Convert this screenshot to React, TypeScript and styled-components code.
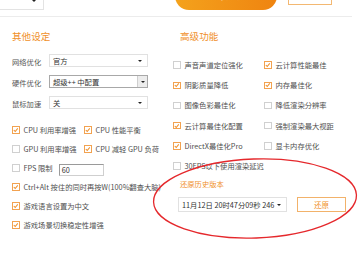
import React from 'react';
import styled, { createGlobalStyle } from 'styled-components';

const GlobalStyle = createGlobalStyle`
  html, body {
    margin: 0;
    padding: 0;
    background: #ffffff;
  }
  body {
    width: 360px;
    height: 254px;
    overflow: hidden;
    font-family: "Noto Sans CJK SC", "Noto Sans", sans-serif;
    color: #4a4a4a;
  }
`;

const ORANGE = '#f0902a';

const Page = styled.div`
  position: relative;
  width: 360px;
  height: 254px;
  overflow: hidden;
`;

const TopBar = styled.div`
  display: flex;
  align-items: flex-end;
  height: 10px;
  overflow: hidden;
`;

const TopSelect = styled.div`
  box-sizing: border-box;
  width: 44px;
  height: 18px;
  border: 1px solid #e3e3e3;
  border-left: none;
  display: flex;
  align-items: center;
  justify-content: flex-end;
  padding-right: 7px;
  background: #fff;
`;

const StartButton = styled.div`
  width: 102px;
  height: 31px;
  margin-left: 131px;
  border-radius: 14px;
  background: linear-gradient(90deg, #f4a21c, #ef8410);
  color: #fff;
  font-size: 11px;
  font-weight: bold;
  display: flex;
  align-items: center;
  justify-content: center;
  line-height: 1;
`;

const GhostButton = styled.div`
  box-sizing: border-box;
  width: 44px;
  height: 20px;
  margin-left: 11px;
  margin-bottom: 5.5px;
  border: 1px solid #f3b872;
  background: #fff;
`;

const Divider = styled.div`
  width: 352px;
  height: 1px;
  margin-top: 6px;
  background: #ececec;
`;

const Main = styled.div`
  display: grid;
  grid-template-columns: 161px 1fr;
  padding-left: 12px;
`;

const Column = styled.div`
  display: flex;
  flex-direction: column;
`;

const Title = styled.div<{ indent?: number }>`
  margin-top: 13px;
  padding-left: ${p => p.indent ?? 0}px;
  font-size: 9.6px;
  line-height: 12px;
  color: ${ORANGE};
`;

const FormList = styled.div`
  display: flex;
  flex-direction: column;
  gap: 8px;
  margin-top: 12px;
`;

const FormRow = styled.div`
  display: flex;
  align-items: center;
  height: 13px;
`;

const FormLabel = styled.span`
  width: 37px;
  padding-top: 3px;
  font-size: 7.3px;
  line-height: 10px;
  color: #555;
  white-space: nowrap;
`;

const Select = styled.div<{ width: number; height: number; strong?: boolean }>`
  box-sizing: border-box;
  width: ${p => p.width}px;
  height: ${p => p.height}px;
  border: 1px solid ${p => (p.strong ? '#a8a8a8' : '#e1e1e1')};
  background: #fff;
  display: flex;
  align-items: center;
  justify-content: space-between;
  padding-left: 3px;
  padding-right: ${p => (p.strong ? 0 : 5)}px;
  font-size: 7.3px;
  line-height: 10px;
  color: #333;
  white-space: nowrap;
`;

const DropButton = styled.div`
  box-sizing: border-box;
  width: 10px;
  height: 100%;
  background: #ececec;
  border-left: 1px solid #cfcfcf;
  display: flex;
  align-items: center;
  justify-content: center;
`;

const Caret = styled.span`
  width: 0;
  height: 0;
  border-left: 2.2px solid transparent;
  border-right: 2.2px solid transparent;
  border-top: 2.6px solid #222;
`;

const CheckGrid = styled.div<{ colWidth: number; rowHeight: number; top: number }>`
  display: grid;
  grid-template-columns: ${p => p.colWidth}px 1fr;
  grid-auto-rows: ${p => p.rowHeight}px;
  margin-top: ${p => p.top}px;
`;

const CheckItem = styled.div<{ wide?: boolean }>`
  display: flex;
  align-items: center;
  gap: 4px;
  grid-column: ${p => (p.wide ? '1 / 3' : 'auto')};
  font-size: 7.3px;
  line-height: 10px;
  color: #4f4f4f;
  white-space: nowrap;
`;

const Box = styled.span<{ checked: boolean }>`
  box-sizing: border-box;
  flex: none;
  width: 7.5px;
  height: 7.5px;
  border: 1px solid ${p => (p.checked ? '#f2a250' : '#d0d0d0')};
  background: #fff;
  display: flex;
  align-items: center;
  justify-content: center;
`;

const NumberInput = styled.div`
  box-sizing: border-box;
  width: 45px;
  height: 12px;
  margin-left: 2px;
  margin-top: 3px;
  border: 1px solid #cfcfcf;
  border-top-color: #9a9a9a;
  border-left-color: #9a9a9a;
  padding-left: 2px;
  font-size: 7.3px;
  line-height: 10px;
  color: #333;
`;

const RestoreLabel = styled.div`
  margin-top: 3px;
  padding-left: 7px;
  font-size: 7.3px;
  line-height: 10px;
  color: ${ORANGE};
`;

const RestoreRow = styled.div`
  display: flex;
  align-items: center;
  gap: 10px;
  margin-top: 8px;
  padding-left: 5px;
`;

const RestoreButton = styled.div`
  box-sizing: border-box;
  width: 49px;
  height: 15px;
  border: 1px solid #f2b26a;
  background: #fff;
  color: ${ORANGE};
  font-size: 7.5px;
  display: flex;
  align-items: center;
  justify-content: center;
`;

const Annotation = styled.svg`
  position: absolute;
  left: 0;
  top: 0;
  pointer-events: none;
`;

const Check: React.FC<{ checked: boolean }> = ({ checked }) => (
  <Box checked={checked}>
    {checked && (
      <svg width="6" height="6" viewBox="0 0 6 6">
        <polyline points="0.8,3 2.4,4.6 5.2,1.2" fill="none" stroke="#f0902a" strokeWidth="1.1" />
      </svg>
    )}
  </Box>
);

interface Opt {
  label: string;
  checked: boolean;
  wide?: boolean;
}

const leftOptions: Opt[] = [
  { label: 'CPU 利用率增强', checked: true },
  { label: 'CPU 性能平衡', checked: true },
  { label: 'GPU 利用率增强', checked: false },
  { label: 'CPU 减轻 GPU 负荷', checked: true },
];

const leftTail: Opt[] = [
  { label: 'Ctrl+Alt 按住的同时再按W(100%翻查大脑)', checked: true, wide: true },
  { label: '游戏语言设置为中文', checked: true, wide: true },
  { label: '游戏场景切换稳定性增强', checked: true, wide: true },
];

const rightOptions: Opt[] = [
  { label: '声音声道定位强化', checked: false },
  { label: '云计算性能最佳', checked: true },
  { label: '阴影质量降低', checked: true },
  { label: '内存最佳化', checked: true },
  { label: '图像色彩最佳化', checked: false },
  { label: '降低渲染分辨率', checked: false },
  { label: '云计算最佳化配置', checked: true },
  { label: '强制渲染最大视距', checked: false },
  { label: 'DirectX最佳化Pro', checked: true },
  { label: '显卡内存优化', checked: false },
  { label: '30FPS以下使用渲染延迟', checked: false, wide: true },
];

const Option: React.FC<Opt> = ({ label, checked, wide }) => (
  <CheckItem wide={wide}>
    <Check checked={checked} />
    <span>{label}</span>
  </CheckItem>
);

const App: React.FC = () => (
  <Page>
    <GlobalStyle />
    <TopBar>
      <TopSelect>
        <Caret />
      </TopSelect>
      <StartButton>立即加速</StartButton>
      <GhostButton />
    </TopBar>
    <Divider />
    <Main>
      <Column>
        <Title>其他设定</Title>
        <FormList>
          <FormRow>
            <FormLabel>网络优化</FormLabel>
            <Select width={99} height={13}>
              <span>官方</span>
              <Caret />
            </Select>
          </FormRow>
          <FormRow>
            <FormLabel>硬件优化</FormLabel>
            <Select width={99} height={13} strong>
              <span>超级++ 中配置</span>
              <DropButton>
                <Caret />
              </DropButton>
            </Select>
          </FormRow>
          <FormRow>
            <FormLabel>鼠标加速</FormLabel>
            <Select width={99} height={13}>
              <span>关</span>
              <Caret />
            </Select>
          </FormRow>
        </FormList>
        <CheckGrid colWidth={72} rowHeight={19} top={11.5}>
          {leftOptions.map(o => (
            <Option key={o.label} {...o} />
          ))}
          <CheckItem wide>
            <Check checked={false} />
            <span>FPS 限制</span>
            <NumberInput>60</NumberInput>
          </CheckItem>
          {leftTail.map(o => (
            <Option key={o.label} {...o} />
          ))}
        </CheckGrid>
      </Column>
      <Column>
        <Title indent={7}>高级功能</Title>
        <CheckGrid colWidth={91} rowHeight={20.2} top={13}>
          {rightOptions.map(o => (
            <Option key={o.label} {...o} />
          ))}
        </CheckGrid>
        <RestoreLabel>还原历史版本</RestoreLabel>
        <RestoreRow>
          <Select width={109} height={15}>
            <span>11月12日 20时47分09秒 246</span>
            <Caret />
          </Select>
          <RestoreButton>还原</RestoreButton>
        </RestoreRow>
      </Column>
    </Main>
    <Annotation width="360" height="254" viewBox="0 0 360 254">
      <ellipse
        cx="255"
        cy="198.5"
        rx="101.5"
        ry="39.5"
        transform="rotate(-2 255 198.5)"
        fill="none"
        stroke="#e5282c"
        strokeWidth="1.3"
      />
    </Annotation>
  </Page>
);

export default App;
